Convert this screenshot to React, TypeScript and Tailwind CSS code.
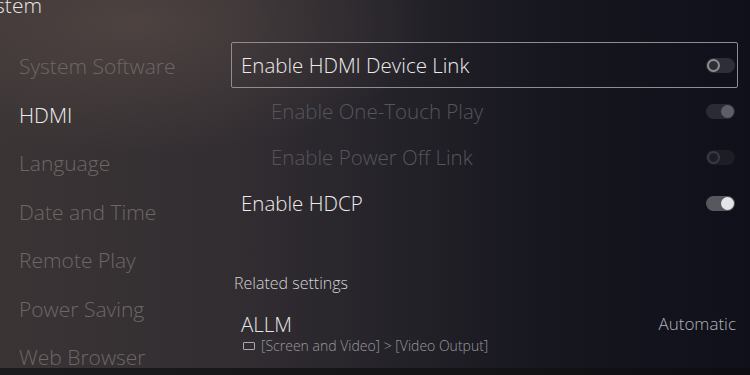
import React from "react";

type ToggleProps = { on: boolean; dim?: boolean };

function Toggle({ on, dim }: ToggleProps) {
  if (on) {
    return (
      <div
        className={`w-[29px] h-[15px] rounded-full flex items-center justify-end pr-[1px] ${
          dim ? "bg-[#2b2b33]" : "bg-[#57575e]"
        }`}
      >
        <div className={`w-[13px] h-[13px] rounded-full ${dim ? "bg-[#5e5e66]" : "bg-[#e4e4e6]"}`} />
      </div>
    );
  }
  return (
    <div
      className={`w-[29px] h-[15px] rounded-full flex items-center pl-[1px] ${
        dim ? "bg-[#1d1d25]" : "bg-[#2e2e36]"
      }`}
    >
      <div
        className={`w-[13px] h-[13px] rounded-full border-2 ${
          dim ? "border-[#3a3a42]" : "border-[#8e8e94]"
        }`}
      />
    </div>
  );
}

const navItems = [
  { label: "System Software", active: false },
  { label: "HDMI", active: true },
  { label: "Language", active: false },
  { label: "Date and Time", active: false },
  { label: "Remote Play", active: false },
  { label: "Power Saving", active: false },
  { label: "Web Browser", active: false },
];

const rows = [
  { label: "Enable HDMI Device Link", indent: false, dim: false, on: false, focus: true },
  { label: "Enable One-Touch Play", indent: true, dim: true, on: true, focus: false },
  { label: "Enable Power Off Link", indent: true, dim: true, on: false, focus: false },
  { label: "Enable HDCP", indent: false, dim: false, on: true, focus: false },
];

export default function App() {
  return (
    <div
      className="w-[750px] h-[375px] overflow-hidden flex flex-col font-light text-[#e6e6e6] bg-[radial-gradient(ellipse_40%_35%_at_18%_6%,rgba(105,88,80,0.45),transparent),linear-gradient(to_right,#3a3435,#332e32_30%,#25232a_52%,#17171f_72%,#0f101a)]"
      style={{ fontFamily: '"Open Sans", "Noto Sans", sans-serif' }}
    >
      <div className="flex-1 flex flex-col min-h-0">
        <div className="h-[42px] shrink-0">
          <div className="text-[21px] leading-[20px] -mt-[5px] -ml-[26px] text-[#e8e8e8]">System</div>
        </div>
        <div className="flex flex-1 min-h-0">
          <div className="w-[231px] shrink-0 flex flex-col">
            {navItems.map((n) => (
              <div
                key={n.label}
                className={`h-[48.5px] shrink-0 flex items-center pl-[19px] text-[21px] leading-[24px] ${
                  n.active ? "text-[#ececec]" : "text-[#6d6766]"
                }`}
              >
                {n.label}
              </div>
            ))}
          </div>
          <div className="w-[507px] flex flex-col">
            {rows.map((r) => (
              <div
                key={r.label}
                className={`h-[46px] shrink-0 flex items-center justify-between pr-[2px] rounded-[2px] border ${
                  r.focus ? "border-[#8e8e92]" : "border-transparent"
                } ${r.indent ? "pl-[39px]" : "pl-[9px]"}`}
              >
                <span
                  className={`text-[20.5px] leading-[24px] ${
                    r.dim ? "text-[#55555d]" : "text-[#ececec]"
                  }`}
                >
                  {r.label}
                </span>
                <Toggle on={r.on} dim={r.dim} />
              </div>
            ))}
            <div className="mt-[47px] pl-[3px] text-[16px] leading-[20px] text-[#d2d2d4]">Related settings</div>
            <div className="mt-[19px] pl-[10px] pr-[2px] flex justify-between items-center">
              <span className="text-[20.5px] leading-[24px] text-[#e4e4e6]">ALLM</span>
              <span className="text-[17px] leading-[24px] text-[#b4b4b8]">Automatic</span>
            </div>
            <div className="pl-[12px] flex items-center gap-[6px] h-[20px] text-[14px] leading-[20px] text-[#9a9a9e]">
              <div className="w-[12px] h-[8px] border-[1.5px] border-[#a8a8ac] rounded-[1px]" />
              <span>[Screen and Video] &gt; [Video Output]</span>
            </div>
          </div>
        </div>
      </div>
      <div className="h-[7px] shrink-0 bg-[linear-gradient(to_right,#1b1a1d,#141417_60%,#0e0e12)]" />
    </div>
  );
}
